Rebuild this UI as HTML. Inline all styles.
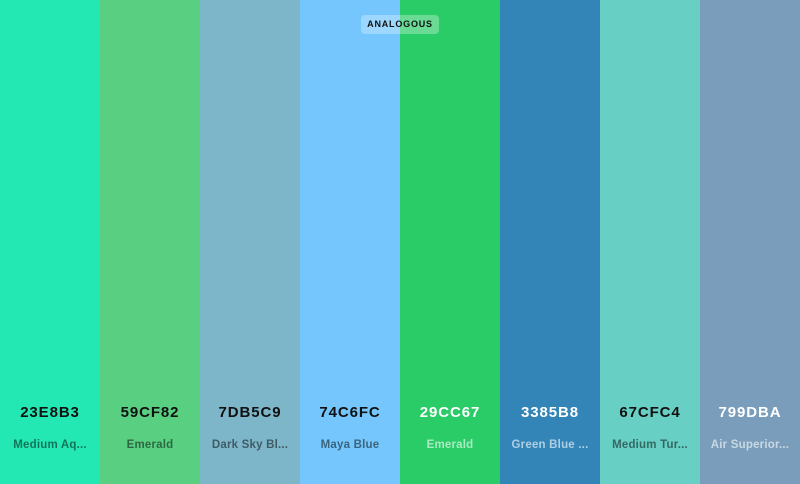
<!DOCTYPE html>
<html><head><meta charset="utf-8"><style>
*{margin:0;padding:0;box-sizing:border-box}
body{width:800px;height:484px;overflow:hidden;font-family:"Liberation Sans",sans-serif;position:relative;display:flex}
.c{width:100px;height:484px;position:relative;text-align:center}
.h{position:absolute;top:404px;left:0;right:0;font-size:15px;font-weight:bold;color:#111;letter-spacing:0.9px}
.n{position:absolute;top:439px;left:0;right:0;font-size:11.5px;font-weight:bold;color:rgba(0,0,0,0.5);letter-spacing:0.2px}
.w .h{color:#fff}
.w .n{color:rgba(255,255,255,0.6)}
.b{position:absolute;left:361px;top:15px;width:78px;height:19px;border-radius:4px;background:rgba(255,255,255,0.3);font-size:9px;font-weight:bold;letter-spacing:0.8px;line-height:19px;text-align:center;color:#111}
</style></head><body>
<div class="c" style="background:#23E8B3"><div class="h">23E8B3</div><div class="n">Medium Aq...</div></div>
<div class="c" style="background:#59CF82"><div class="h">59CF82</div><div class="n">Emerald</div></div>
<div class="c" style="background:#7DB5C9"><div class="h">7DB5C9</div><div class="n">Dark Sky Bl...</div></div>
<div class="c" style="background:#74C6FC"><div class="h">74C6FC</div><div class="n">Maya Blue</div></div>
<div class="c w" style="background:#29CC67"><div class="h">29CC67</div><div class="n">Emerald</div></div>
<div class="c w" style="background:#3385B8"><div class="h">3385B8</div><div class="n">Green Blue ...</div></div>
<div class="c" style="background:#67CFC4"><div class="h">67CFC4</div><div class="n">Medium Tur...</div></div>
<div class="c w" style="background:#799DBA"><div class="h">799DBA</div><div class="n">Air Superior...</div></div>
<div class="b">ANALOGOUS</div>
</body></html>
